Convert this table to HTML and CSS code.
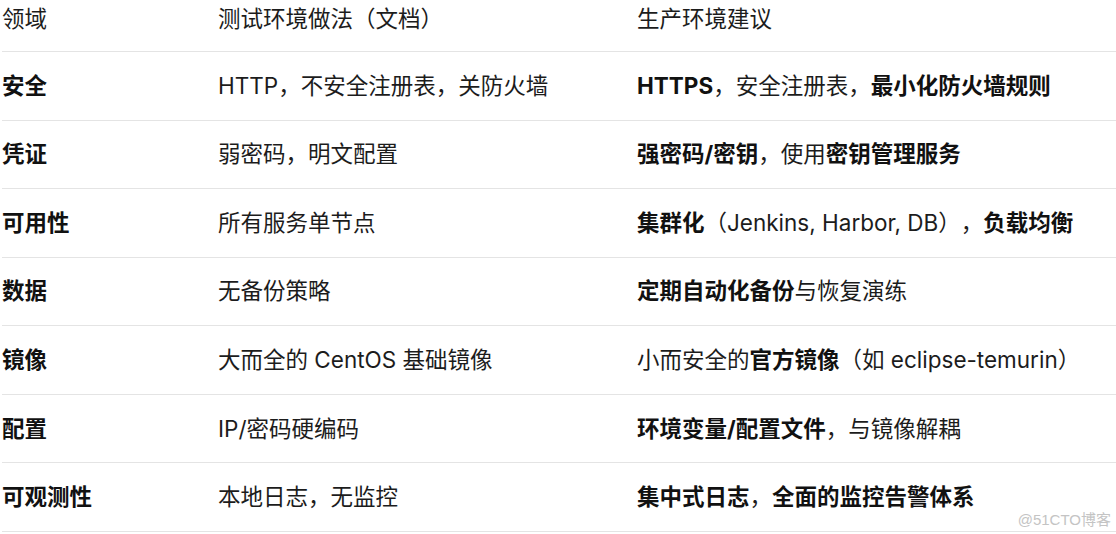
FILE: index.html
```html
<!DOCTYPE html>
<html lang="zh-CN">
<head>
<meta charset="utf-8">
<title>测试环境与生产环境对比</title>
<link rel="stylesheet" href="styles.css">
</head>
<body>
<div class="table">
  <div class="row head">
    <div class="cell">领域</div>
    <div class="cell">测试环境做法（文档）</div>
    <div class="cell">生产环境建议</div>
  </div>
  <div class="row">
    <div class="cell"><b>安全</b></div>
    <div class="cell">HTTP，不安全注册表，关防火墙</div>
    <div class="cell"><b>HTTPS</b>，安全注册表，<b>最小化防火墙规则</b></div>
  </div>
  <div class="row">
    <div class="cell"><b>凭证</b></div>
    <div class="cell">弱密码，明文配置</div>
    <div class="cell"><b>强密码/密钥</b>，使用<b>密钥管理服务</b></div>
  </div>
  <div class="row">
    <div class="cell"><b>可用性</b></div>
    <div class="cell">所有服务单节点</div>
    <div class="cell"><b>集群化</b>（Jenkins, Harbor, DB），<b>负载均衡</b></div>
  </div>
  <div class="row">
    <div class="cell"><b>数据</b></div>
    <div class="cell">无备份策略</div>
    <div class="cell"><b>定期自动化备份</b>与恢复演练</div>
  </div>
  <div class="row">
    <div class="cell"><b>镜像</b></div>
    <div class="cell">大而全的 CentOS 基础镜像</div>
    <div class="cell">小而安全的<b>官方镜像</b>（如 eclipse-temurin）</div>
  </div>
  <div class="row">
    <div class="cell"><b>配置</b></div>
    <div class="cell">IP/密码硬编码</div>
    <div class="cell"><b>环境变量/配置文件</b>，与镜像解耦</div>
  </div>
  <div class="row">
    <div class="cell"><b>可观测性</b></div>
    <div class="cell">本地日志，无监控</div>
    <div class="cell"><b>集中式日志</b>，<b>全面的监控告警体系</b></div>
  </div>
</div>
<div class="watermark">@51CTO博客</div>
</body>
</html>
```

FILE: styles.css
```css
html, body {
  margin: 0;
  padding: 0;
  background: #ffffff;
}

body {
  font-family: "Inter", "Noto Sans CJK SC", sans-serif;
  font-size: 22.5px;
  color: #1c1c1c;
  position: relative;
  width: 1116px;
  height: 534px;
  overflow: hidden;
  text-spacing-trim: space-all;
}

.table {
  margin-left: 2px;
}

.row {
  display: grid;
  grid-template-columns: 216px 419px 1fr;
  border-bottom: 1px solid #e4e4e4;
  padding: 16.79px 0;
  line-height: 34px;
}

.row.head {
  padding: 2px 0 15px;
}

.cell {
  white-space: nowrap;
}

.cell b {
  font-weight: 700;
  color: #111111;
}

.watermark {
  position: absolute;
  right: 5px;
  bottom: 5px;
  font-family: "Liberation Sans", "Noto Sans CJK SC", sans-serif;
  font-size: 15px;
  line-height: 18px;
  color: #c4c4c4;
}
```
